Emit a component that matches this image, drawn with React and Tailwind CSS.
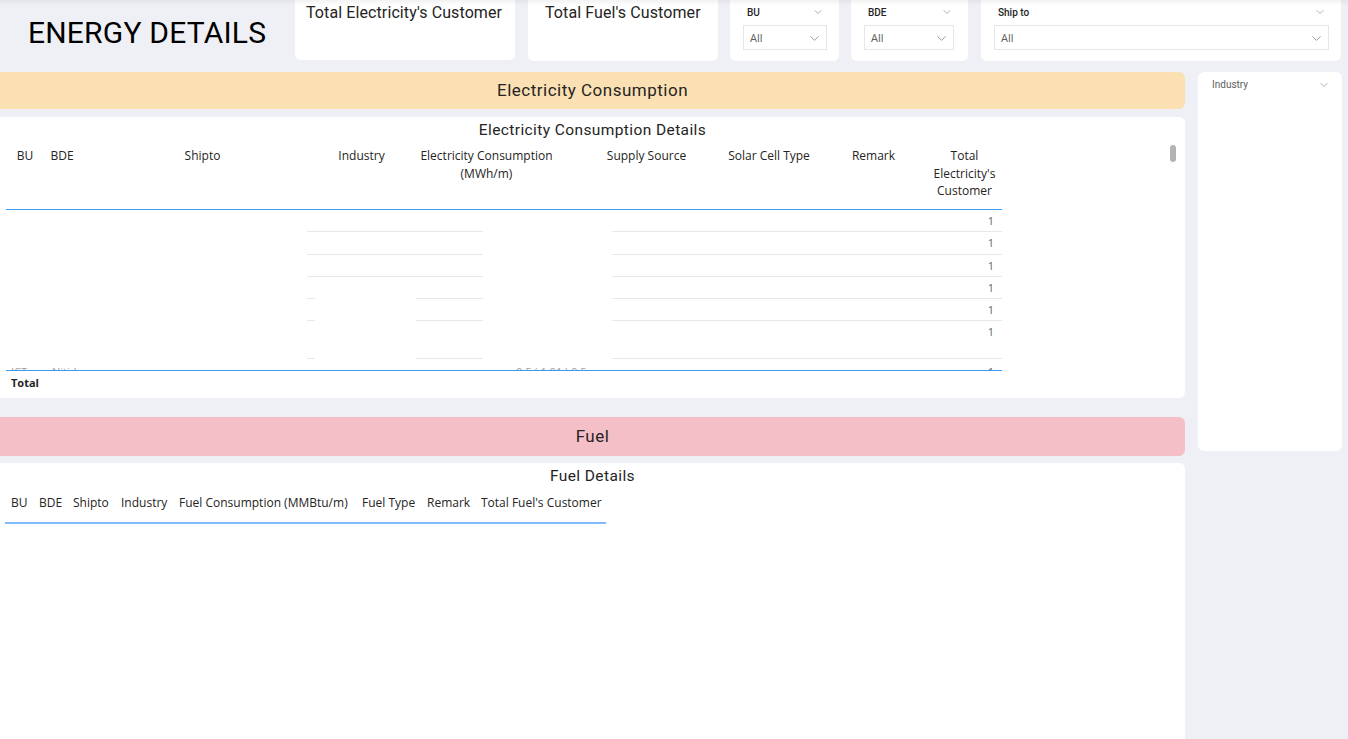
import React from 'react';
import { ChevronDown } from 'lucide-react';

const din = { fontFamily: 'Roboto, "DejaVu Sans", sans-serif' };
const segoe = { fontFamily: '"Open Sans", "Noto Sans", sans-serif' };

const elecCols = [
  { w: 'w-[38px]', label: ['BU'] },
  { w: 'w-[36px]', label: ['BDE'] },
  { w: 'w-[245px]', label: ['Shipto'] },
  { w: 'w-[73px]', label: ['Industry'] },
  { w: 'w-[177px]', label: ['Electricity Consumption', '(MWh/m)'] },
  { w: 'w-[143px]', label: ['Supply Source'] },
  { w: 'w-[102px]', label: ['Solar Cell Type'] },
  { w: 'w-[107px]', label: ['Remark'] },
  { w: 'w-[75px]', label: ['Total', "Electricity's", 'Customer'] },
];

const fuelCols = [
  { w: 'w-[28px]', label: 'BU' },
  { w: 'w-[34px]', label: 'BDE' },
  { w: 'w-[48px]', label: 'Shipto' },
  { w: 'w-[58px]', label: 'Industry' },
  { w: 'w-[183px]', label: 'Fuel Consumption (MMBtu/m)' },
  { w: 'w-[65px]', label: 'Fuel Type' },
  { w: 'w-[54px]', label: 'Remark' },
  { w: 'w-[131px]', label: "Total Fuel's Customer" },
];

const rows = [
  { h: 'h-[22px]', split: false },
  { h: 'h-[23px]', split: false },
  { h: 'h-[22px]', split: false },
  { h: 'h-[22px]', split: true },
  { h: 'h-[22px]', split: true },
  { h: 'h-[38px]', split: true },
];

function Slicer({ label, width, boxClass }) {
  return (
    <div className={`${width} h-[61px] bg-white rounded-b-[6px] px-[13px] pt-[5px]`}>
      <div className="flex items-center justify-between pl-[4px] pr-[2px] h-[14px]">
        <span className="text-[10px] text-[#252423] font-medium" style={din}>{label}</span>
        <ChevronDown size={12} strokeWidth={1} className="text-[#605e5c]" />
      </div>
      <div className={`${boxClass} mt-[6px] h-[25px] border border-[#e6e6e6] flex items-center justify-between pl-[6px] pr-[4px]`}>
        <span className="text-[11px] text-[#605e5c] pt-[2px]" style={segoe}>All</span>
        <ChevronDown size={15} strokeWidth={1} className="text-[#605e5c] mt-[2px]" />
      </div>
    </div>
  );
}

function Segment({ w, line, children }) {
  return (
    <div className={`${w} h-full ${line ? 'border-b border-[#e8e8e8]' : ''} shrink-0`}>
      {children}
    </div>
  );
}

export default function App() {
  return (
    <div className="relative w-full h-[739px] bg-[#eff0f5] overflow-hidden" style={segoe}>
      <div className="absolute top-0 left-0 right-0 h-[6px] bg-gradient-to-b from-black/5 to-transparent z-10" />

      {/* top row */}
      <div className="flex h-[61px]">
        <div className="w-[295px] shrink-0 flex items-center pl-[28px] pt-[4px]">
          <h1 className="text-[30px] text-black tracking-[0.2px]" style={din}>ENERGY DETAILS</h1>
        </div>
        <div className="w-[220px] h-[60px] bg-white rounded-b-[6px] px-[11px] whitespace-nowrap">
          <span className="text-[16px] leading-[21px] text-[#252423] tracking-[0.1px]" style={din}>Total Electricity's Customer</span>
        </div>
        <div className="ml-[13px] w-[190px] h-[61px] bg-white rounded-b-[6px] pl-[17px] whitespace-nowrap">
          <span className="text-[16px] leading-[21px] text-[#252423] tracking-[0.1px]" style={din}>Total Fuel's Customer</span>
        </div>
        <div className="ml-[12px]">
          <Slicer label="BU" width="w-[109px]" boxClass="w-[84px]" />
        </div>
        <div className="ml-[12px]">
          <Slicer label="BDE" width="w-[117px]" boxClass="w-[90px]" />
        </div>
        <div className="ml-[13px]">
          <Slicer label="Ship to" width="w-[360px]" boxClass="w-[335px]" />
        </div>
      </div>

      {/* body */}
      <div className="flex mt-[11px]">
        <div className="w-[1185px] shrink-0 flex flex-col">
          <div className="h-[37px] bg-[#fae0b3] rounded-r-[6px] flex items-center justify-center">
            <span className="text-[17px] text-[#252423] tracking-[0.5px]" style={din}>Electricity Consumption</span>
          </div>

          <div className="relative mt-[8px] h-[281px] bg-white rounded-r-[6px] px-[6px]">
            <div className="text-center text-[15.5px] tracking-[0.4px] text-[#252423] pt-[3px] leading-[20px]" style={din}>
              Electricity Consumption Details
            </div>
            <div className="w-[996px]">
              <div className="flex h-[70px] pt-[7px] border-b border-[#3d9aea]">
                {elecCols.map(c => (
                  <div key={c.label[0]} className={`${c.w} shrink-0 text-center text-[12px] leading-[17.5px] text-[#252423]`}>
                    {c.label.map(l => <div key={l}>{l}</div>)}
                  </div>
                ))}
              </div>
              <div className="h-[160px] overflow-hidden">
                {rows.map((r, i) => (
                  <div key={i} className={`flex ${r.h}`}>
                    <Segment w="w-[301px]" />
                    {r.split ? (
                      <>
                        <Segment w="w-[8px]" line />
                        <Segment w="w-[101px]" />
                        <Segment w="w-[67px]" line />
                      </>
                    ) : (
                      <Segment w="w-[176px]" line />
                    )}
                    <Segment w="w-[129px]" />
                    <Segment w="w-[390px]" line>
                      <div className="text-right pr-[8px] pt-[3px] text-[11px] leading-[16px] text-[#666666]">1</div>
                    </Segment>
                  </div>
                ))}
                <div className="flex h-[24px] pt-[5px] text-[11px] leading-[16px] text-[#a0a0a0]">
                  <div className="w-[38px] shrink-0 pl-[5px]">ICT</div>
                  <div className="w-[36px] shrink-0 pl-[8px]">Nitid</div>
                  <div className="w-[422px] shrink-0" />
                  <div className="w-[110px] shrink-0 pl-[14px]">0.5 ( 1.01 ) 9.5</div>
                  <div className="w-[390px] shrink-0 text-right pr-[8px] text-[#666666]">1</div>
                </div>
              </div>
              <div className="border-t border-[#3d9aea] pt-[4px] pl-[5px] text-[11px] font-bold text-[#252423] leading-[16px]">
                Total
              </div>
            </div>
            <div className="absolute left-[1170px] top-[28px] w-[6px] h-[17px] rounded-full bg-[#b3b3b3]" />
          </div>

          <div className="mt-[19px] h-[39px] bg-[#f5bfc8] rounded-r-[6px] flex items-center justify-center">
            <span className="text-[17px] text-[#252423] tracking-[0.5px]" style={din}>Fuel</span>
          </div>

          <div className="mt-[7px] h-[290px] bg-white rounded-tr-[6px] px-[5px]">
            <div className="text-center text-[15.5px] tracking-[0.4px] text-[#252423] pt-[3px] leading-[20px]" style={din}>
              Fuel Details
            </div>
            <div className="flex w-[601px] mt-[8px] h-[30px] border-b-2 border-[#7fbcff]">
              {fuelCols.map(c => (
                <div key={c.label} className={`${c.w} shrink-0 pl-[6px] text-[12px] leading-[17px] text-[#252423] whitespace-nowrap`}>
                  {c.label}
                </div>
              ))}
            </div>
          </div>
        </div>

        <div className="ml-[13px] w-[144px] h-[379px] bg-white rounded-[6px] px-[14px] pt-[5px]">
          <div className="flex items-center justify-between">
            <span className="text-[10px] text-[#605e5c]" style={din}>Industry</span>
            <ChevronDown size={12} strokeWidth={1} className="text-[#605e5c] -mr-[2px]" />
          </div>
        </div>
      </div>
    </div>
  );
}
